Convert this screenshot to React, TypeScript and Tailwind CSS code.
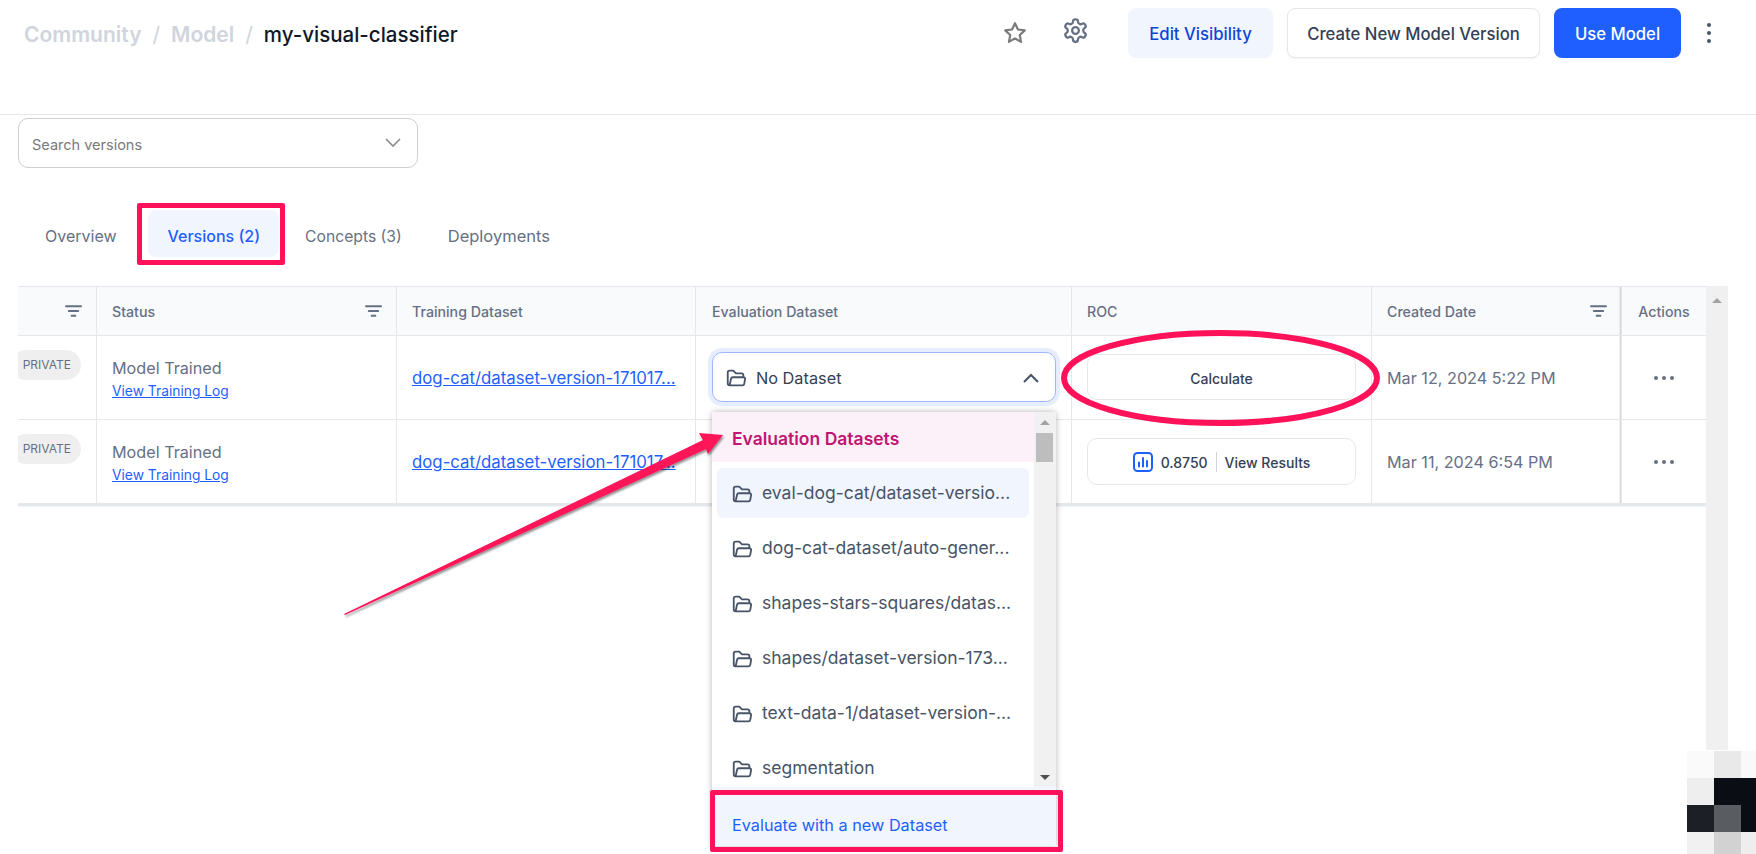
import React from "react";

const pink = "#ff1259";

function FolderIcon({ className }: { className: string }) {
  return (
    <svg viewBox="0 0 24 24" fill="none" stroke="currentColor" strokeWidth="2" strokeLinecap="round" strokeLinejoin="round" className={className}>
      <path d="M5 20h14a2 2 0 0 0 2-1.6l.9-5.2a1.6 1.6 0 0 0-1.6-2H8.6a2 2 0 0 0-2 1.6L5 20Zm0 0a2 2 0 0 1-2-2V6a2 2 0 0 1 2-2h4l3 3h6a2 2 0 0 1 2 2v2" />
    </svg>
  );
}

function FilterIcon() {
  return (
    <svg viewBox="0 0 18 12" className="w-[17px] h-[12px] text-[#667085]" fill="currentColor">
      <rect x="0" y="0" width="18" height="2" rx="1" />
      <rect x="3" y="5" width="12" height="2" rx="1" />
      <rect x="6" y="10" width="6" height="2" rx="1" />
    </svg>
  );
}

function Dots() {
  return (
    <div className="flex gap-[4px]">
      <span className="w-[4px] h-[4px] rounded-full bg-[#667085]" />
      <span className="w-[4px] h-[4px] rounded-full bg-[#667085]" />
      <span className="w-[4px] h-[4px] rounded-full bg-[#667085]" />
    </div>
  );
}

const items = [
  "eval-dog-cat/dataset-versio...",
  "dog-cat-dataset/auto-gener...",
  "shapes-stars-squares/datas...",
  "shapes/dataset-version-173...",
  "text-data-1/dataset-version-...",
  "segmentation",
];

function Dropdown() {
  return (
    <div className="absolute left-0 top-[59px] w-[344px] h-[434px] bg-white rounded-t-[4px] shadow-[0_0_6px_rgba(0,0,0,0.3)] z-10 flex flex-col">
      <div className="flex h-[375px] overflow-hidden">
        <div className="flex-1 min-w-0">
          <div className="h-[50px] bg-[#fcf1f8] pl-[20px] pt-[5px] flex items-center text-[17.5px] font-semibold text-[#c01574]">Evaluation Datasets</div>
          <div className="px-[5px] pt-[6px] flex flex-col gap-[5px]">
            {items.map((t, i) => (
              <div key={t} className={`h-[50px] shrink-0 rounded-[6px] pl-[14px] pt-[2px] flex items-center gap-[9px] text-[17.5px] whitespace-nowrap text-[#475467] ${i === 0 ? "bg-[#f1f5fe]" : ""}`}>
                <FolderIcon className="w-[22px] h-[22px] shrink-0 text-[#475467]" />
                <span>{t}</span>
              </div>
            ))}
          </div>
        </div>
        <div className="w-[22px] bg-[#f1f1f1] flex flex-col items-center justify-between pt-[8px] pb-[7px] relative">
          <span className="w-0 h-0 border-x-[5px] border-x-transparent border-b-[5px] border-b-[#a3a3a3]" />
          <span className="absolute left-[2px] top-[21px] w-[17px] h-[29px] bg-[#bdbdbd]" />
          <span className="w-0 h-0 border-x-[5px] border-x-transparent border-t-[5px] border-t-[#505050]" />
        </div>
      </div>
      <div className="h-[59px] bg-[#f1f5fe] pl-[20px] pt-[19px] flex items-center text-[16.25px] text-[#1f5fff]">Evaluate with a new Dataset</div>
    </div>
  );
}

function HeadCell({ children, filter, className = "" }: { children?: React.ReactNode; filter?: boolean; className?: string }) {
  return (
    <div className={`h-[49px] bg-[#f9fafb] border-b border-r border-[#e4e7ec] flex items-center justify-between pl-[15px] pr-[14px] text-[14.2px] font-medium text-[#667085] ${className}`}>
      <span className="pt-[2px]">{children}</span>
      {filter && <FilterIcon />}
    </div>
  );
}

function Cell({ children, className = "" }: { children?: React.ReactNode; className?: string }) {
  return <div className={`h-[84px] border-b border-r border-[#e4e7ec] flex items-center ${className}`}>{children}</div>;
}

function Row({ date, roc, select }: { date: string; roc: React.ReactNode; select?: React.ReactNode }) {
  return (
    <>
      <Cell className="justify-end pr-[15px] overflow-hidden">
        <span className="-translate-y-[13px] h-[30px] w-[70px] shrink-0 rounded-full bg-[#efefef] flex items-center justify-end pr-[10px] text-[12px] text-[#667085]">PRIVATE</span>
      </Cell>
      <Cell className="px-[15px] pt-[2px]">
        <div className="flex flex-col">
          <span className="text-[16.2px] leading-[24px] text-[#667085]">Model Trained</span>
          <span className="text-[13.8px] leading-[20px] mt-[1px] underline text-[#1f5fff]">View Training Log</span>
        </div>
      </Cell>
      <Cell className="pl-[15px] pt-[3px]">
        <span className="text-[16.8px] underline text-[#1f5fff] whitespace-nowrap">dog-cat/dataset-version-171017...</span>
      </Cell>
      <Cell className="px-[16px] relative">{select}</Cell>
      <Cell className="px-[15px]">{roc}</Cell>
      <Cell className="pl-[15px] pt-[2px] text-[16.2px] text-[#667085] shadow-[inset_-2px_0_2px_-1px_rgba(0,0,0,0.2)]">{date}</Cell>
      <Cell className="justify-center border-r-0"><Dots /></Cell>
    </>
  );
}

export default function App() {
  return (
    <div className="relative h-[854px] w-[1756px] overflow-hidden bg-white font-['Inter',sans-serif]">
      <header className="h-[115px] border-b border-[#e4e7ec] flex items-start justify-between pl-[24px] pr-[45px]">
        <div className="flex items-center h-[70px] text-[21px] font-semibold">
          <span className="text-[#d0d5dd]">Community</span>
          <span className="text-[#d0d5dd] font-normal mx-[11px]">/</span>
          <span className="text-[#d0d5dd]">Model</span>
          <span className="text-[#d0d5dd] font-normal mx-[11px]">/</span>
          <span className="text-[20.5px] font-medium text-[#101828]">my-visual-classifier</span>
        </div>
        <div className="flex items-start pt-[8px]">
          <div className="flex mr-[39.5px]">
            <svg viewBox="0 0 24 24" fill="none" stroke="currentColor" strokeWidth="2" strokeLinejoin="round" className="w-[26px] h-[26px] mt-[12px] mr-[33.5px] text-[#7a7a7a]">
              <path d="m12 3 2.7 5.8 6.3.8-4.6 4.3 1.2 6.3L12 17l-5.6 3.2 1.2-6.3L3 9.6l6.3-.8L12 3Z" />
            </svg>
            <svg viewBox="0 0 24 24" fill="none" stroke="currentColor" strokeWidth="2" strokeLinecap="round" strokeLinejoin="round" className="w-[27px] h-[27px] mt-[8.5px] text-[#667085]">
              <path d="M12.22 2h-.44a2 2 0 0 0-2 2v.18a2 2 0 0 1-1 1.73l-.43.25a2 2 0 0 1-2 0l-.15-.08a2 2 0 0 0-2.73.73l-.22.38a2 2 0 0 0 .73 2.73l.15.1a2 2 0 0 1 1 1.72v.51a2 2 0 0 1-1 1.74l-.15.09a2 2 0 0 0-.73 2.73l.22.38a2 2 0 0 0 2.73.73l.15-.08a2 2 0 0 1 2 0l.43.25a2 2 0 0 1 1 1.73V20a2 2 0 0 0 2 2h.44a2 2 0 0 0 2-2v-.18a2 2 0 0 1 1-1.73l.43-.25a2 2 0 0 1 2 0l.15.08a2 2 0 0 0 2.73-.73l.22-.39a2 2 0 0 0-.73-2.73l-.15-.08a2 2 0 0 1-1-1.74v-.5a2 2 0 0 1 1-1.74l.15-.09a2 2 0 0 0 .73-2.73l-.22-.38a2 2 0 0 0-2.73-.73l-.15.08a2 2 0 0 1-2 0l-.43-.25a2 2 0 0 1-1-1.73V4a2 2 0 0 0-2-2z" />
              <circle cx="12" cy="12" r="3" />
            </svg>
          </div>
          <button className="h-[50px] w-[145px] pt-[3px] rounded-[8px] bg-[#f1f5fe] text-[16.7px] font-medium text-[#0f46d1] mr-[14px]">Edit Visibility</button>
          <button className="h-[50px] w-[253px] pt-[3px] rounded-[8px] bg-white border border-[#e4e7ec] text-[16.7px] font-medium text-[#344054] mr-[14px] shadow-[0_1px_2px_rgba(16,24,40,0.05)]">Create New Model Version</button>
          <button className="h-[50px] w-[127px] pt-[3px] rounded-[8px] bg-[#1f5fff] text-[16.7px] font-medium text-white">Use Model</button>
          <div className="flex flex-col gap-[4px] ml-[26px] mt-[15px]">
            <span className="w-[4px] h-[4px] rounded-full bg-[#475467]" />
            <span className="w-[4px] h-[4px] rounded-full bg-[#475467]" />
            <span className="w-[4px] h-[4px] rounded-full bg-[#475467]" />
          </div>
        </div>
      </header>

      <div className="pl-[18px] pt-[3px]">
        <div className="h-[50px] w-[400px] rounded-[10px] border border-[#cfcfcf] flex items-center justify-between pl-[13px] pr-[16px] text-[14.5px] text-[#7a7a7a]">
          <span className="pt-[3px]">Search versions</span>
          <svg viewBox="0 0 16 10" className="w-[16px] h-[10px] text-[#8c8c8c]" fill="none" stroke="currentColor" strokeWidth="1.6"><path d="m1 1 7 7 7-7" /></svg>
        </div>
      </div>

      <nav className="flex items-stretch pl-[25px] mt-[42px] h-[47px] text-[16px] text-[#667085]">
        <div className="flex items-center pt-[5px] px-[20px] mr-[13px]">Overview</div>
        <div className="flex items-center pt-[5px] pl-[20px] pr-[19px] -ml-[2px] rounded-[8px] bg-[#f1f5fe] font-medium text-[#1f5fff]">Versions (2)</div>
        <div className="flex items-center pt-[6px] pl-[26px] pr-[20px] text-[15.7px]">Concepts (3)</div>
        <div className="flex items-center pt-[5px] pl-[26px] text-[16.5px]">Deployments</div>
      </nav>

      <div className="flex pl-[18px] mt-[29px] items-start">
        <div className="w-[1688px] border-t border-[#e4e7ec] border-b-2 border-b-[#e4e7ec] grid grid-cols-[79px_300px_299px_376px_300px_250px_84px] shadow-[1px_1px_2px_rgba(0,0,0,0.06)]">
          <HeadCell filter className="justify-end!" />
          <HeadCell filter>Status</HeadCell>
          <HeadCell>Training Dataset</HeadCell>
          <HeadCell className="pl-[16px]!">Evaluation Dataset</HeadCell>
          <HeadCell>ROC</HeadCell>
          <HeadCell filter className="shadow-[inset_-2px_0_2px_-1px_rgba(0,0,0,0.2)]">Created Date</HeadCell>
          <HeadCell className="justify-center! border-r-0 px-0!">Actions</HeadCell>

          <Row
            date="Mar 12, 2024 5:22 PM"
            roc={
              <button className="h-[46px] w-full -translate-y-[1px] pt-[3px] rounded-[10px] border border-[#e4e7ec] bg-white text-[14px] font-medium text-[#344054]">Calculate</button>
            }
            select={
              <div className="relative w-full">
                <div className="h-[50px] w-[344px] -translate-y-[1px] pt-[3px] rounded-[10px] border border-[#9db9fb] bg-white shadow-[0_0_0_4px_#e6edfd] flex items-center justify-between pl-[12px] pr-[16px] text-[16.3px] text-[#344054]">
                  <div className="flex items-center gap-[9px]">
                    <FolderIcon className="w-[22px] h-[22px] text-[#475467]" />
                    <span>No Dataset</span>
                  </div>
                  <svg viewBox="0 0 16 10" className="w-[16px] h-[10px] text-[#475467]" fill="none" stroke="currentColor" strokeWidth="2"><path d="m1 9 7-7 7 7" /></svg>
                </div>
                <Dropdown />
              </div>
            }
          />
          <Row
            date="Mar 11, 2024 6:54 PM"
            roc={
              <div className="h-[47px] w-full pt-[1px] rounded-[10px] border border-[#e4e7ec] bg-white flex items-center justify-center text-[14px] font-medium text-[#344054]">
                <svg viewBox="0 0 20 20" className="w-[20px] h-[20px] text-[#1f5fff] mr-[8px]" fill="none" stroke="currentColor" strokeWidth="2" strokeLinecap="round">
                  <rect x="1" y="1" width="18" height="18" rx="3.5" />
                  <path d="M6 10.5v4M10 6v8.5M14 9v5.5" />
                </svg>
                <span>0.8750</span>
                <span className="w-px h-[20px] bg-[#d0d5dd] mx-[8px]" />
                <span>View Results</span>
              </div>
            }
          />
        </div>
        <div className="w-[22px] h-[464px] bg-[#f0f0f0] flex justify-center pt-[12px]">
          <span className="w-0 h-0 border-x-[5px] border-x-transparent border-b-[5px] border-b-[#a3a3a3]" />
        </div>
      </div>

      <div className="absolute left-[137px] top-[203px] w-[148px] h-[62px] border-[5px] rounded-[2px] z-20" style={{ borderColor: pink }} />
      <div className="absolute left-[710px] top-[790px] w-[353px] h-[62px] border-[5px] rounded-[2px] z-20" style={{ borderColor: pink }} />

      <svg className="absolute left-0 top-0 z-20 pointer-events-none" width="1756" height="854" fill="none">
        <defs>
          <filter id="ds" x="-5%" y="-5%" width="110%" height="110%">
            <feDropShadow dx="1" dy="2" stdDeviation="1" floodColor="#000" floodOpacity="0.45" />
          </filter>
        </defs>
        <ellipse cx="1220.5" cy="378" rx="156.5" ry="45" stroke={pink} strokeWidth="6" />
        <polygon points="344,614 703,440 699,433 723,435 708,454 706,449 345,615" fill={pink} filter="url(#ds)" />
      </svg>

      <div className="absolute left-[1687px] top-[751px] z-30 grid grid-cols-[27px_27px_15px] grid-rows-[27px_27px_27px_22px]">
        <span className="bg-[#fafafa]" /><span className="bg-[#e9e9e9]" /><span className="bg-[#f9f9f9]" />
        <span className="bg-[#eeeeee]" /><span className="bg-[#0b0d14]" /><span className="bg-[#0b0d14]" />
        <span className="bg-[#1c1f26]" /><span className="bg-[#595c60]" /><span className="bg-[#0b0d14]" />
        <span className="bg-[#f1f1f1]" /><span className="bg-[#d2d2d2]" /><span className="bg-[#eeeeee]" />
      </div>
    </div>
  );
}
